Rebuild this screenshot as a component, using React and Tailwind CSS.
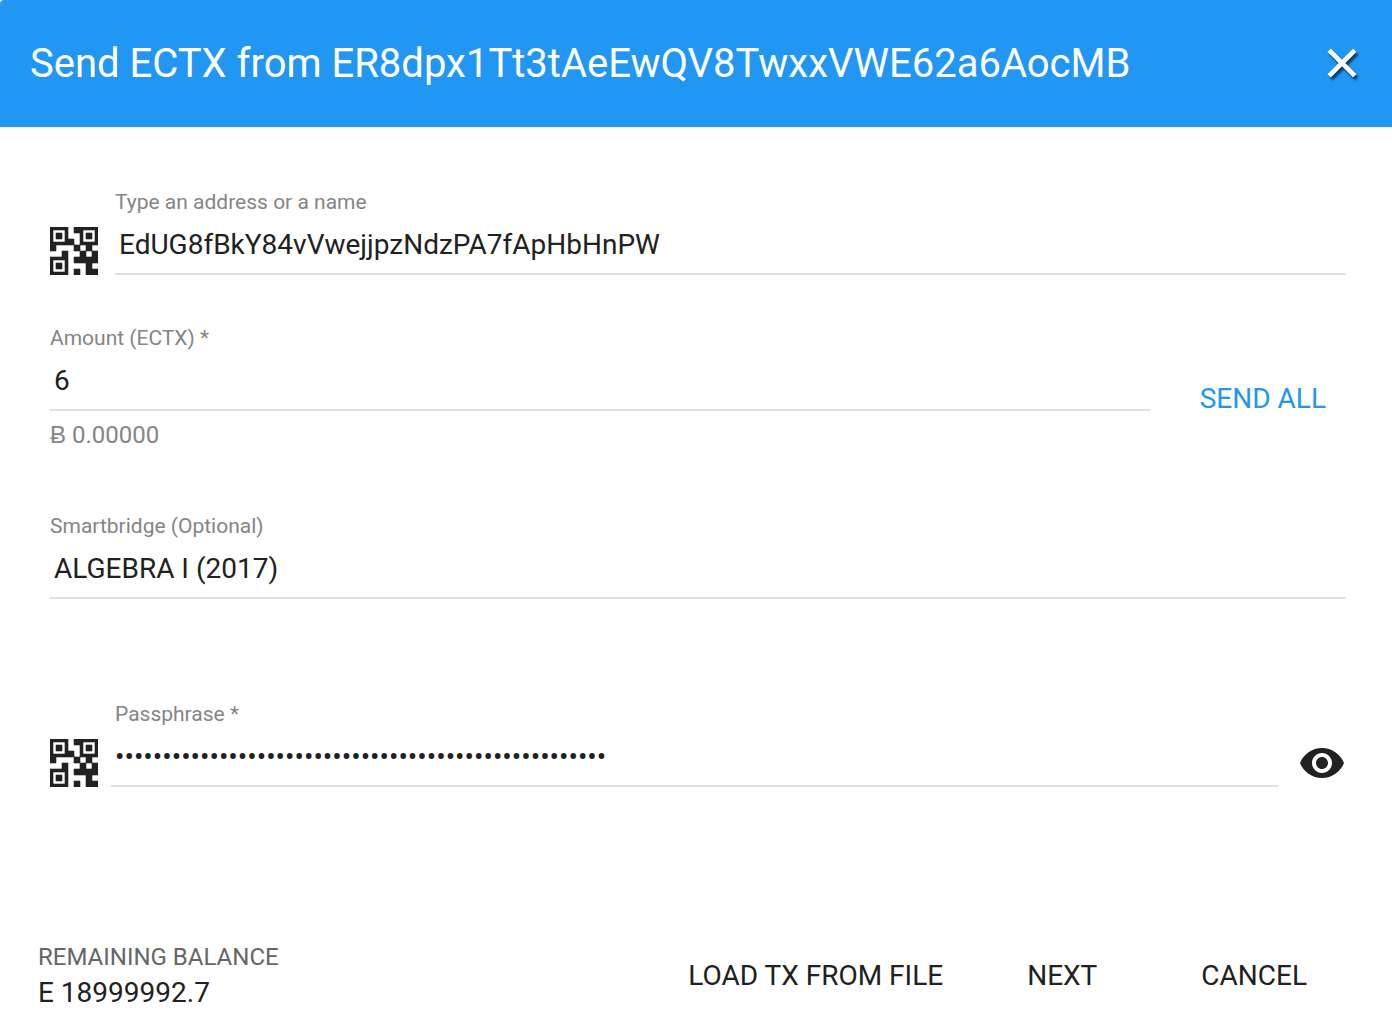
import React, { useState } from "react";

function QrIcon() {
  return (
    <svg
      viewBox="0 0 16 16"
      className="block size-12"
      fill="#212121"
      stroke="#212121"
      strokeWidth="0.2"
      aria-hidden="true"
    >
      <path
        fillRule="evenodd"
        d="M0 0h6v6H0zM1 1v4h4V1zM10 0h6v6h-6zM11 1v4h4V1zM0 10h6v6H0zM1 11v4h4v-4z"
      />
      <path d="M2 2h2v2H2zM12 2h2v2h-2zM2 12h2v2H2zM8 0h2v2H8zM6 4h2v2H6zM0 6h2v2H0zM8 6h2v2H8zM12 6h2v2h-2zM4 8h2v2H4zM10 8h2v2h-2zM14 8h2v2h-2zM8 10h8v2H8zM12 12h2v2h-2zM8 14h2v2H8zM12 14h4v2h-4z" />
    </svg>
  );
}

function Field({ id, label, ...input }) {
  return (
    <div className="flex min-w-0 flex-1 flex-col">
      <label htmlFor={id} className="text-[21px] leading-7 text-[#858585]">
        {label}
      </label>
      <input
        id={id}
        className="h-[59px] w-full border-b-2 border-[#e0e0e0] bg-transparent pl-1 text-[28px] leading-8 text-[#212121] outline-none focus:border-[#2196f3]"
        {...input}
      />
    </div>
  );
}

export default function App() {
  const [visible, setVisible] = useState(false);
  return (
    <form
      className="flex min-h-screen flex-col bg-white font-[Roboto,sans-serif] text-[#212121]"
      onSubmit={(e) => e.preventDefault()}
    >
      <header className="flex h-[127px] items-center justify-between rounded-tl bg-[#2196f3] pr-[26px] pl-[30px] text-white">
        <h1 className="text-[40px] leading-12">Send ECTX from ER8dpx1Tt3tAeEwQV8TwxxVWE62a6AocMB</h1>
        <button type="button" aria-label="Close" className="pb-0.5">
          <svg
            viewBox="0 0 24 24"
            className="block size-12 drop-shadow-[2px_3px_1px_rgba(0,0,0,0.6)]"
            fill="currentColor"
            stroke="currentColor"
            strokeWidth="0.4"
          >
            <path d="M19 6.41L17.59 5 12 10.59 6.41 5 5 6.41 10.59 12 5 17.59 6.41 19 12 13.41 17.59 19 19 17.59 13.41 12z" />
          </svg>
        </button>
      </header>

      <main className="flex flex-1 flex-col pt-[61px] pr-[46px] pl-[50px]">
        <div className="flex items-end">
          <button type="button" aria-label="Scan address" className="mr-[17px]">
            <QrIcon />
          </button>
          <Field id="address" label="Type an address or a name" defaultValue="EdUG8fBkY84vVwejjpzNdzPA7fApHbHnPW" />
        </div>

        <div className="mt-[49px] flex items-end">
          <Field id="amount" label="Amount (ECTX) *" defaultValue="6" />
          <button type="button" className="ml-[30px] px-5 text-[28px] leading-6 text-[#2196f3]">
            SEND ALL
          </button>
        </div>
        <p className="mt-2 text-2xl text-[#858585]">Ƀ 0.00000</p>

        <div className="mt-[61px] flex">
          <Field id="smartbridge" label="Smartbridge (Optional)" defaultValue="ALGEBRA I (2017)" />
        </div>

        <div className="mt-[101px] flex items-end">
          <button type="button" aria-label="Scan passphrase" className="mr-[13px]">
            <QrIcon />
          </button>
          <Field
            id="passphrase"
            label={<span className="pl-1">Passphrase *</span>}
            type={visible ? "text" : "password"}
            defaultValue="abandon ability able about above absent absorb abstr"
          />
          <button
            type="button"
            aria-label="Show passphrase"
            className="ml-5"
            onClick={() => setVisible(!visible)}
          >
            <svg viewBox="0 0 24 24" className="block size-12" fill="#212121">
              <path d="M12 4.5C7 4.5 2.73 7.61 1 12c1.73 4.39 6 7.5 11 7.5s9.27-3.11 11-7.5c-1.73-4.39-6-7.5-11-7.5zM12 17c-2.76 0-5-2.24-5-5s2.24-5 5-5 5 2.24 5 5-2.24 5-5 5zm0-8c-1.66 0-3 1.34-3 3s1.34 3 3 3 3-1.34 3-3-1.34-3-3-3z" />
            </svg>
          </button>
        </div>
      </main>

      <footer className="flex items-center pr-[73px] pb-3 pl-[38px]">
        <div className="flex-1">
          <p className="text-2xl leading-9 text-[#666]">REMAINING BALANCE</p>
          <p className="text-[28px] leading-9">E 18999992.7</p>
        </div>
        <div className="flex pt-0.5 text-[28px] leading-9">
          <button type="button" className="px-3">LOAD TX FROM FILE</button>
          <button type="button" className="ml-[60px] px-3">NEXT</button>
          <button type="button" className="ml-20 px-3">CANCEL</button>
        </div>
      </footer>
    </form>
  );
}
